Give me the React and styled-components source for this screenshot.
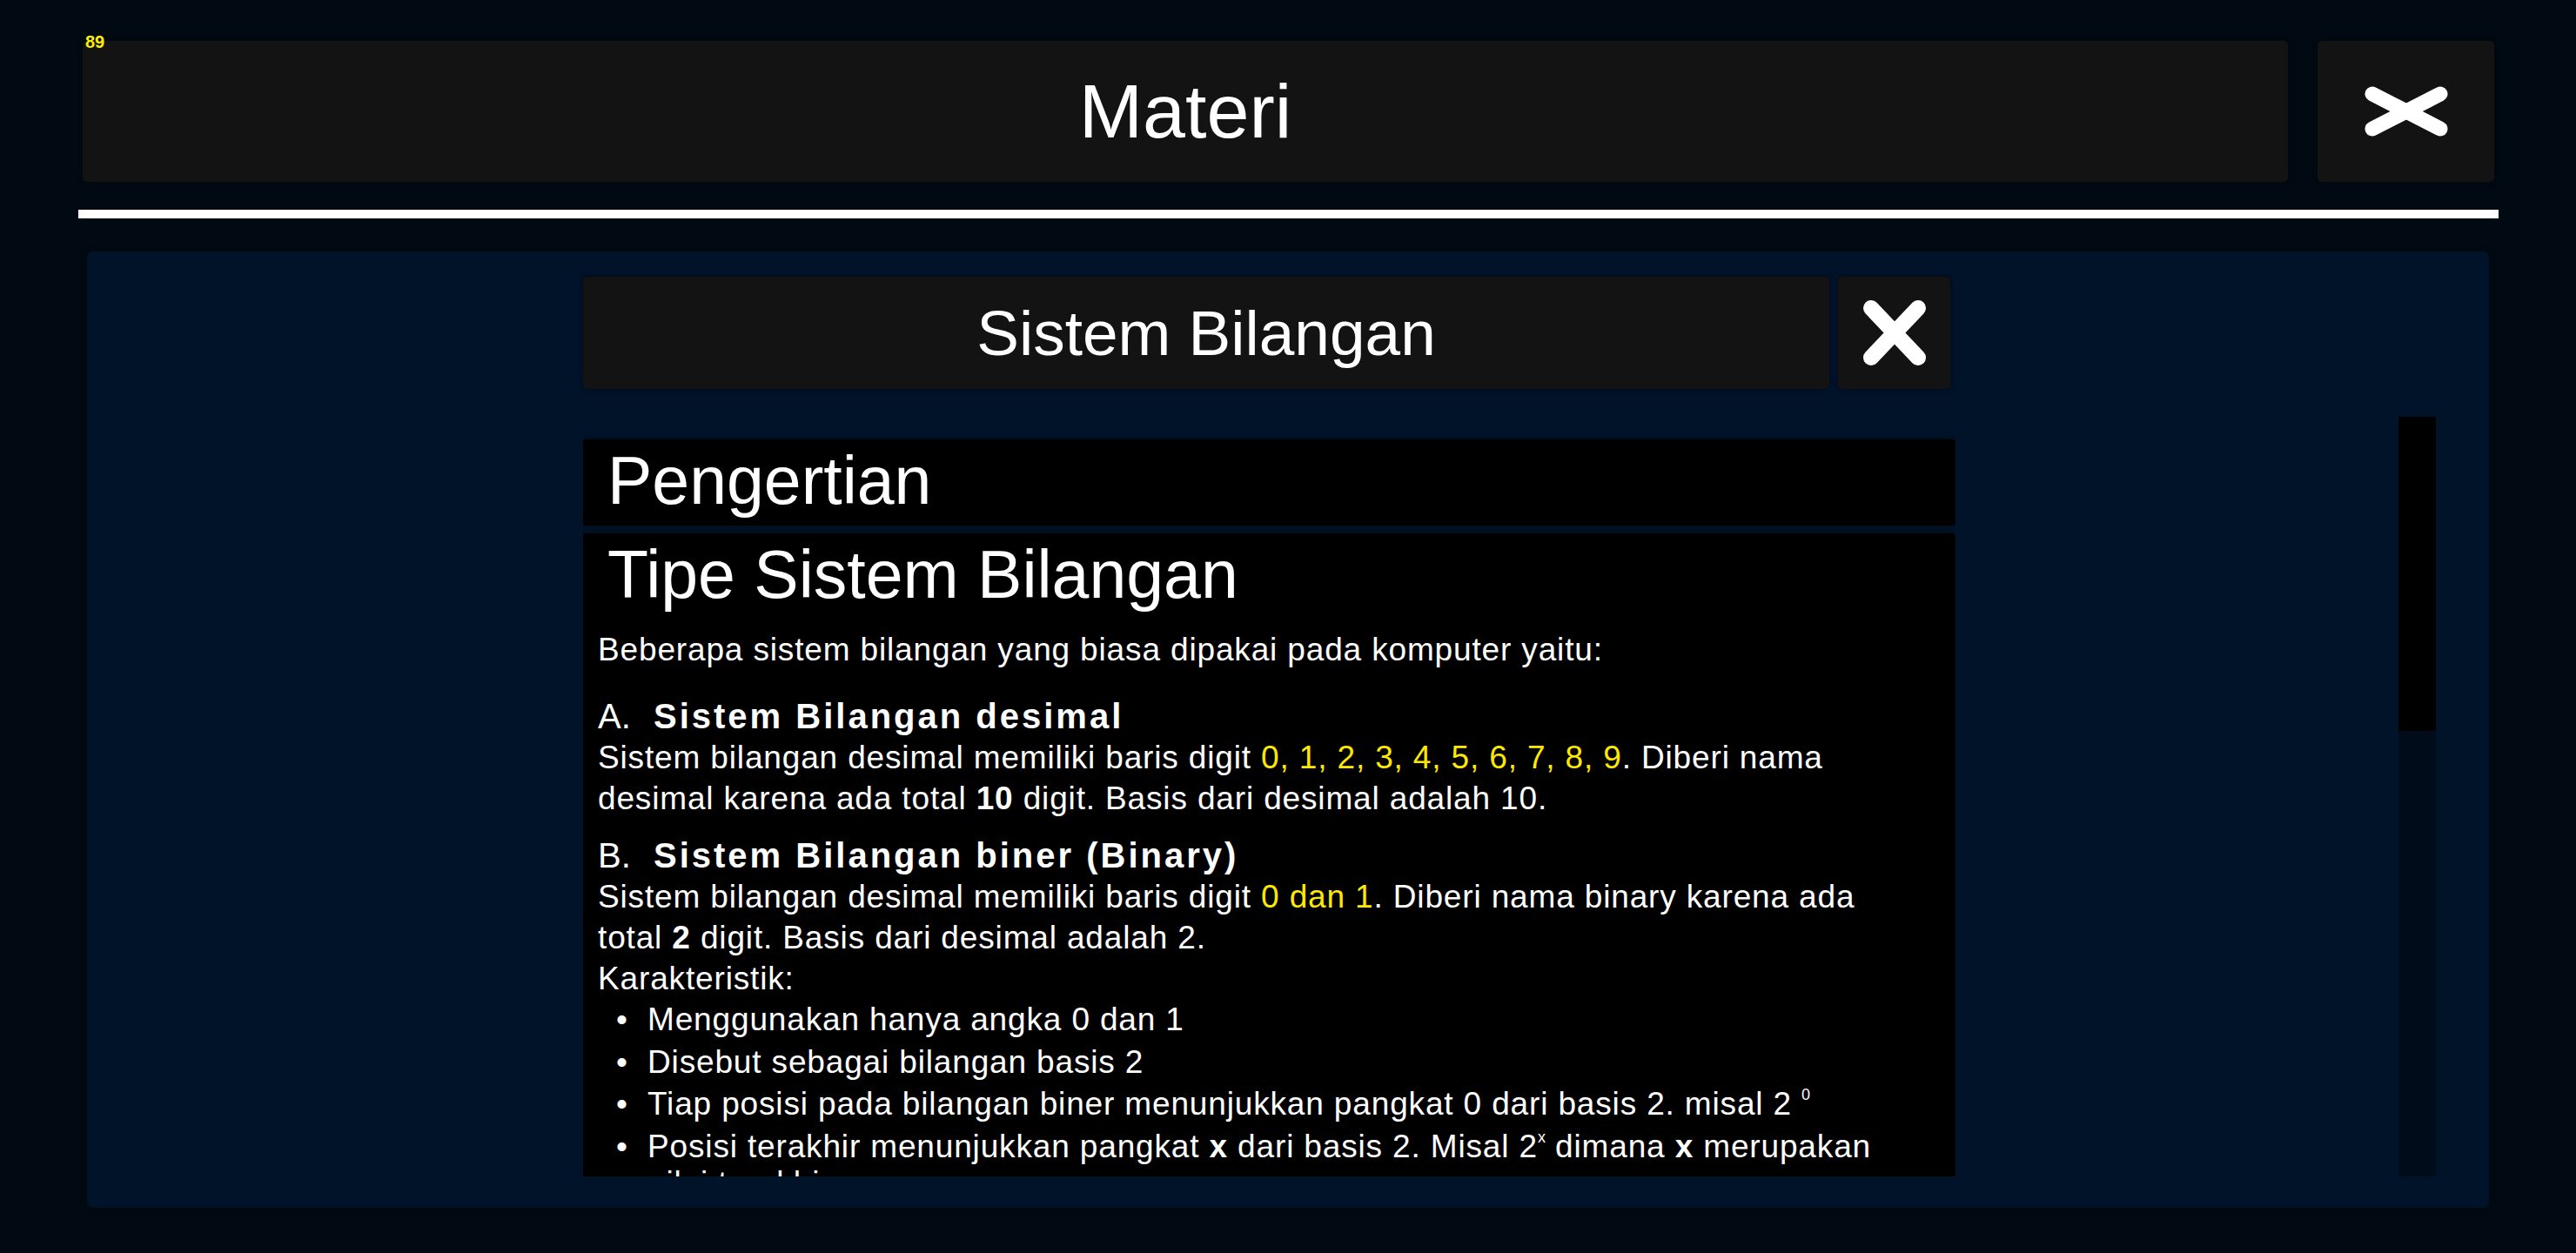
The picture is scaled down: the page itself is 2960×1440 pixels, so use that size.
import React from "react";
import styled, { createGlobalStyle } from "styled-components";

const GlobalStyle = createGlobalStyle`
  html, body {
    margin: 0;
    padding: 0;
    background: #010a13;
  }
  body {
    font-family: "Liberation Sans", Arial, sans-serif;
    color: #ffffff;
  }
`;

const Page = styled.div`
  position: relative;
  width: 2960px;
  height: 1440px;
  background: #010a13;
  overflow: hidden;
`;

const Fps = styled.span`
  position: absolute;
  left: 98px;
  top: 38px;
  font-size: 20px;
  line-height: 20px;
  font-weight: bold;
  color: #ffee00;
`;

const TopBar = styled.header`
  display: flex;
  gap: 34px;
  height: 162px;
  padding: 47px 94px 0 95px;
`;

const Tile = styled.div`
  display: flex;
  align-items: center;
  justify-content: center;
  background: #131313;
  border-radius: 5px;
  box-shadow: 0 0 5px rgba(0, 0, 0, 0.55);
`;

const TopTitle = styled(Tile)`
  flex: 1;
  font-size: 88px;
`;

const TopClose = styled(Tile)`
  width: 203px;
  flex-shrink: 0;
`;

const Divider = styled.div`
  height: 10px;
  margin: 32px 89px 0 90px;
  background: #ffffff;
`;

const Panel = styled.section`
  box-sizing: border-box;
  height: 1099px;
  margin: 38px 100px 0;
  padding: 29px 61px 36px 570px;
  background: #001329;
  border-radius: 6px;
  box-shadow: 0 0 6px rgba(0, 0, 0, 0.5);
  display: flex;
  flex-direction: column;
`;

const PanelHeader = styled.div`
  display: flex;
  gap: 10px;
  width: 1571px;
  height: 129px;
  flex-shrink: 0;
`;

const SubTitle = styled(Tile)`
  flex: 1;
  font-size: 73px;
`;

const SubClose = styled(Tile)`
  width: 129px;
  flex-shrink: 0;
`;

const PanelBody = styled.div`
  display: flex;
  margin-top: 32px;
  height: 873px;
`;

const Scroll = styled.div`
  width: 1577px;
  padding-top: 26px;
  overflow: hidden;
  display: flex;
  flex-direction: column;
  gap: 9px;
`;

const Track = styled.div`
  margin-left: auto;
  width: 43px;
  background: #000c19;
`;

const Thumb = styled.div`
  height: 361px;
  background: #000000;
`;

const Card = styled.article`
  flex-shrink: 0;
  background: #000000;
  border-radius: 4px;
  box-shadow: 0 0 6px rgba(0, 0, 0, 0.6);
  padding: 0 57px 0 17px;
`;

const CardTitle = styled.h2`
  margin: 0;
  padding: 3px 0 7px 11px;
  font-size: 77px;
  font-weight: normal;
  line-height: 1.15;
`;

const Para = styled.p`
  margin: ${(p) => p.$margin || "0"};
  font-size: 37px;
  line-height: 47px;
  letter-spacing: 0.85px;
`;

const SubHeading = styled.h3`
  display: flex;
  margin: ${(p) => (p.$first ? "0" : "19px 0 0")};
  font-size: 40px;
  line-height: 47px;
  font-weight: normal;
`;

const Marker = styled.span`
  width: 64px;
  flex-shrink: 0;
`;

const SubHeadingText = styled.span`
  font-weight: bold;
  letter-spacing: 3px;
`;

const Hi = styled.span`
  color: #ffe800;
`;

const List = styled.ul`
  margin: 3px 0 0;
  padding: 0;
  list-style: none;
`;

const Item = styled.li`
  display: flex;
  margin-bottom: 6px;
  font-size: 37px;
  line-height: 42.5px;
  letter-spacing: 0.85px;
`;

const Bullet = styled.span`
  box-sizing: border-box;
  width: 57px;
  padding-left: 21px;
  flex-shrink: 0;
`;

const Sup = styled.sup`
  font-size: 18px;
  line-height: 0;
  letter-spacing: 0;
  vertical-align: 17px;
`;

function WideCross() {
  return (
    <svg width="96" height="58" viewBox="0 0 96 58">
      <g stroke="#fff" strokeWidth="17" strokeLinecap="round">
        <line x1="9" y1="9" x2="87" y2="49" />
        <line x1="9" y1="49" x2="87" y2="9" />
      </g>
    </svg>
  );
}

function TallCross() {
  return (
    <svg width="76" height="77" viewBox="0 0 76 77">
      <g stroke="#fff" strokeWidth="18" strokeLinecap="round">
        <line x1="11" y1="10" x2="65" y2="67" />
        <line x1="11" y1="67" x2="65" y2="10" />
      </g>
    </svg>
  );
}

const bullets = [
  <>Menggunakan hanya angka 0 dan 1</>,
  <>Disebut sebagai bilangan basis 2</>,
  <>
    Tiap posisi pada bilangan biner menunjukkan pangkat 0 dari basis 2. misal 2 <Sup>0</Sup>
  </>,
  <>
    Posisi terakhir menunjukkan pangkat <b>x</b> dari basis 2. Misal 2<Sup>x</Sup> dimana <b>x</b>{" "}
    merupakan nilai terakhir
  </>,
];

export default function App() {
  return (
    <Page>
      <GlobalStyle />
      <TopBar>
        <TopTitle>Materi</TopTitle>
        <TopClose>
          <WideCross />
        </TopClose>
      </TopBar>
      <Divider />
      <Panel>
        <PanelHeader>
          <SubTitle>Sistem Bilangan</SubTitle>
          <SubClose>
            <TallCross />
          </SubClose>
        </PanelHeader>
        <PanelBody>
          <Scroll>
            <Card>
              <CardTitle>Pengertian</CardTitle>
            </Card>
            <Card>
              <CardTitle>Tipe Sistem Bilangan</CardTitle>
              <Para $margin="12px 0 30px">
                Beberapa sistem bilangan yang biasa dipakai pada komputer yaitu:
              </Para>
              <SubHeading $first>
                <Marker>A.</Marker>
                <SubHeadingText>Sistem Bilangan desimal</SubHeadingText>
              </SubHeading>
              <Para>
                Sistem bilangan desimal memiliki baris digit <Hi>0, 1, 2, 3, 4, 5, 6, 7, 8, 9</Hi>. Diberi
                nama desimal karena ada total <b>10</b> digit. Basis dari desimal adalah 10.
              </Para>
              <SubHeading>
                <Marker>B.</Marker>
                <SubHeadingText>Sistem Bilangan biner (Binary)</SubHeadingText>
              </SubHeading>
              <Para>
                Sistem bilangan desimal memiliki baris digit <Hi>0 dan 1</Hi>. Diberi nama binary karena ada
                total <b>2</b> digit. Basis dari desimal adalah 2.
              </Para>
              <Para>Karakteristik:</Para>
              <List>
                {bullets.map((b, i) => (
                  <Item key={i}>
                    <Bullet>•</Bullet>
                    <span>{b}</span>
                  </Item>
                ))}
              </List>
              <SubHeading>
                <Marker>C.</Marker>
                <SubHeadingText>Sistem Bilangan oktal</SubHeadingText>
              </SubHeading>
            </Card>
          </Scroll>
          <Track>
            <Thumb />
          </Track>
        </PanelBody>
      </Panel>
      <Fps>89</Fps>
    </Page>
  );
}
